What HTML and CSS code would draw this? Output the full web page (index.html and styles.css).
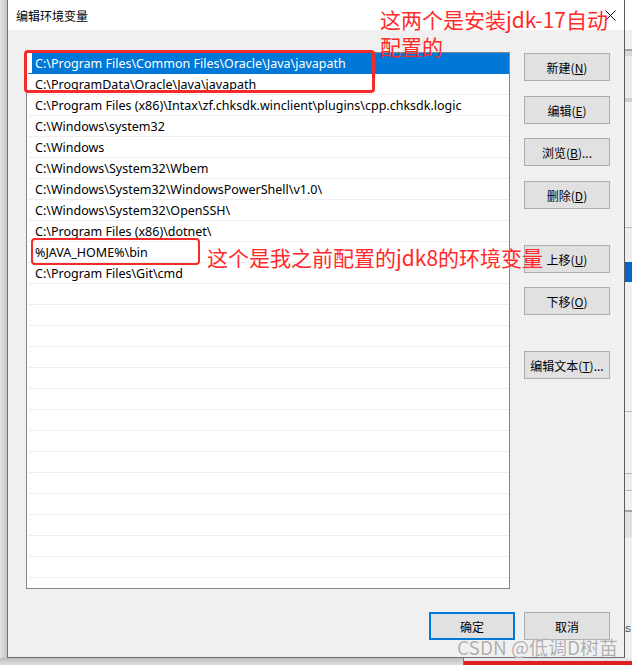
FILE: index.html
```html
<!DOCTYPE html>
<html lang="zh-CN">
<head>
<meta charset="utf-8">
<title>编辑环境变量</title>
<link rel="stylesheet" href="styles.css">
</head>
<body>
<div class="screen">
  <div class="shadow-left"></div>
  <div class="dialog">
    <div class="titlebar">
      <span class="title">编辑环境变量</span>
      <svg class="close" width="11" height="11" viewBox="0 0 11 11"><path d="M0.5 0.5 L10.5 10.5 M10.5 0.5 L0.5 10.5" stroke="#111" stroke-width="1" fill="none"/></svg>
    </div>
    <div class="body">
      <div class="main">
        <div class="listbox">
          <div class="row selected">C:\Program Files\Common Files\Oracle\Java\javapath</div>
          <div class="row">C:\ProgramData\Oracle\Java\javapath</div>
          <div class="row">C:\Program Files (x86)\Intax\zf.chksdk.winclient\plugins\cpp.chksdk.logic</div>
          <div class="row">C:\Windows\system32</div>
          <div class="row">C:\Windows</div>
          <div class="row">C:\Windows\System32\Wbem</div>
          <div class="row">C:\Windows\System32\WindowsPowerShell\v1.0\</div>
          <div class="row">C:\Windows\System32\OpenSSH\</div>
          <div class="row">C:\Program Files (x86)\dotnet\</div>
          <div class="row">%JAVA_HOME%\bin</div>
          <div class="row">C:\Program Files\Git\cmd</div>
          <div class="row"></div><div class="row"></div><div class="row"></div><div class="row"></div>
          <div class="row"></div><div class="row"></div><div class="row"></div><div class="row"></div>
          <div class="row"></div><div class="row"></div><div class="row"></div><div class="row"></div>
          <div class="row"></div><div class="row"></div><div class="row"></div>
        </div>
        <div class="side">
          <button class="btn b-new">新建(<u>N</u>)</button>
          <button class="btn b-edit">编辑(<u>E</u>)</button>
          <button class="btn b-browse">浏览(<u>B</u>)...</button>
          <button class="btn b-del">删除(<u>D</u>)</button>
          <button class="btn b-up">上移(<u>U</u>)</button>
          <button class="btn b-down">下移(<u>O</u>)</button>
          <button class="btn b-text">编辑文本(<u>T</u>)...</button>
        </div>
      </div>
      <div class="footer">
        <button class="btn ok">确定</button>
        <button class="btn">取消</button>
      </div>
    </div>
  </div>
  <div class="bg-right">
    <div class="r-white"></div>
    <div class="r-a"></div>
    <div class="r-line"></div>
    <div class="r-b"></div>
    <div class="r-c"></div>
    <div class="r-line2"></div>
    <div class="r-d"></div>
    <div class="r-line3"></div>
    <div class="r-e"></div>
    <div class="r-blue"></div>
    <div class="r-f"></div>
    <div class="r-line3"></div>
    <div class="r-g"></div>
    <div class="r-line3"></div>
    <div class="r-h"></div>
    <div class="r-line3"></div>
    <div class="r-i"></div>
    <div class="r-line"></div>
    <div class="r-block"></div>
    <div class="r-j"><span class="r-s">S</span></div>
  </div>
</div>
<div class="bottom">
  <div class="b-shadow"></div>
  <div class="b-right"></div>
</div>

<div class="mark mark1"></div>
<div class="mark mark2"></div>
<div class="note note1">这两个是安装jdk-17自动<br>配置的</div>
<div class="note note2">这个是我之前配置的jdk8的环境变量</div>
<div class="watermark">CSDN @低调D树苗</div>
</body>
</html>
```

FILE: styles.css
```css
* { box-sizing: border-box; }
html, body { margin: 0; padding: 0; }
body {
  width: 632px;
  height: 665px;
  overflow: hidden;
  position: relative;
  background: #d0d0d0;
  font-family: "Noto Sans", "Noto Sans CJK SC", sans-serif;
  font-size: 12px;
  color: #000;
}
.screen { display: flex; height: 658px; }
.shadow-left {
  width: 7px;
  background: linear-gradient(to right, #e4e4e4, #c4c4c4);
}
.dialog {
  width: 618px;
  display: flex;
  flex-direction: column;
  border-left: 1px solid #707070;
  border-right: 1px solid #5c5c5c;
  border-bottom: 1px solid #707070;
  background: #f0f0f0;
}
.titlebar {
  height: 30px;
  background: #fff;
  display: flex;
  align-items: center;
  justify-content: space-between;
  padding: 0 8px 0 8px;
}
.title {
  font-family: "Noto Sans CJK SC", sans-serif;
  font-size: 12px;
  line-height: 14px;
  margin-top: 2px;
}
.close { margin-top: 1px; }
.body {
  flex: 1;
  padding: 22px 14px 0 18px;
  display: flex;
  flex-direction: column;
}
.main { display: flex; }
.listbox {
  width: 484px;
  height: 537px;
  border: 1px solid #828790;
  background: #fff;
  overflow: hidden;
  padding-left: 1px;
}
.row {
  height: 21px;
  line-height: 22px;
  border-bottom: 1px solid #efefef;
  padding-left: 7px;
  white-space: nowrap;
  font-family: "Noto Sans", sans-serif;
  font-size: 12.5px;
  color: #000;
}
.row.selected {
  background: linear-gradient(to right, transparent 4px, #0078d7 4px);
  color: #fff;
  border-bottom-color: #0078d7;
}
.side {
  margin-left: 14px;
  width: 86px;
  display: flex;
  flex-direction: column;
}
.btn {
  width: 86px;
  height: 28px;
  padding: 0;
  background: #e1e1e1;
  border: 1px solid #adadad;
  font-family: "Noto Sans CJK SC", sans-serif;
  font-size: 12px;
  color: #000;
  text-align: center;
}
.btn u { text-underline-offset: 1px; }
.b-new { margin-top: 1px; }
.b-edit { margin-top: 15px; }
.b-browse { margin-top: 14px; }
.b-del { margin-top: 15px; }
.b-up { margin-top: 36px; }
.b-down { margin-top: 14px; }
.b-text { margin-top: 36px; }
.footer {
  margin-top: 23px;
  display: flex;
  justify-content: flex-end;
  gap: 9px;
}
.btn.ok { border: 2px solid #0078d7; }

/* background app visible at the right edge */
.bg-right {
  width: 7px;
  display: flex;
  flex-direction: column;
  background: #f0f0f0;
}
.r-white { height: 30px; background: #fff; }
.r-a { height: 19px; background: #f0f0f0; }
.r-line { height: 2px; background: #a6a6a6; }
.r-b { height: 5px; background: #d8d8d8; }
.r-c { height: 42px; background: #ececec; }
.r-line2 { height: 4px; background: #cfcfcf; }
.r-d { height: 125px; background: #f0f0f0; }
.r-line3 { height: 1px; background: #b8b8b8; }
.r-e { height: 34px; background: #eeeeee; }
.r-blue { height: 20px; background: #0b63c4; }
.r-f { height: 129px; background: #f0f0f0; }
.r-g { height: 61px; background: #f0f0f0; }
.r-h { height: 16px; background: #ededed; }
.r-i { height: 19px; background: #f0f0f0; }
.r-block { height: 26px; background: #e2e2e2; }
.r-j { flex: 1; background: #f0f0f0; }
.r-s {
  display: block;
  margin-top: 86px;
  font-family: "Liberation Sans", sans-serif;
  font-size: 9px;
  line-height: 10px;
  color: #333;
}

.bottom { display: flex; height: 7px; }
.b-shadow {
  width: 463px;
  background: linear-gradient(to bottom, #bdbdbd, #e0e0e0);
}
.b-right {
  flex: 1;
  border-left: 1px solid #777;
  background: linear-gradient(to bottom, #e6e6e6 0, #e6e6e6 3px, #e02020 3px);
}

/* annotations (overlay) */
.mark {
  position: absolute;
  border: 3px solid #f52a2a;
  border-radius: 4px;
}
.mark1 { left: 24px; top: 50px; width: 351px; height: 43px; }
.mark2 { left: 31px; top: 238px; width: 169px; height: 27px; border-width: 2px; }
.note {
  position: absolute;
  font-family: "Noto Sans CJK SC", sans-serif;
  font-size: 21px;
  color: #ff2a2a;
  white-space: nowrap;
}
.note1 { left: 380px; top: 6px; line-height: 27px; }
.note2 { left: 207px; top: 243px; line-height: 28px; }
.watermark {
  position: absolute;
  left: 457px;
  top: 635px;
  font-family: "Noto Sans CJK SC", sans-serif;
  font-size: 19px;
  line-height: 24px;
  color: rgba(160, 160, 160, 0.85);
  text-shadow: 0 0 1px #fff;
  white-space: nowrap;
}
```
